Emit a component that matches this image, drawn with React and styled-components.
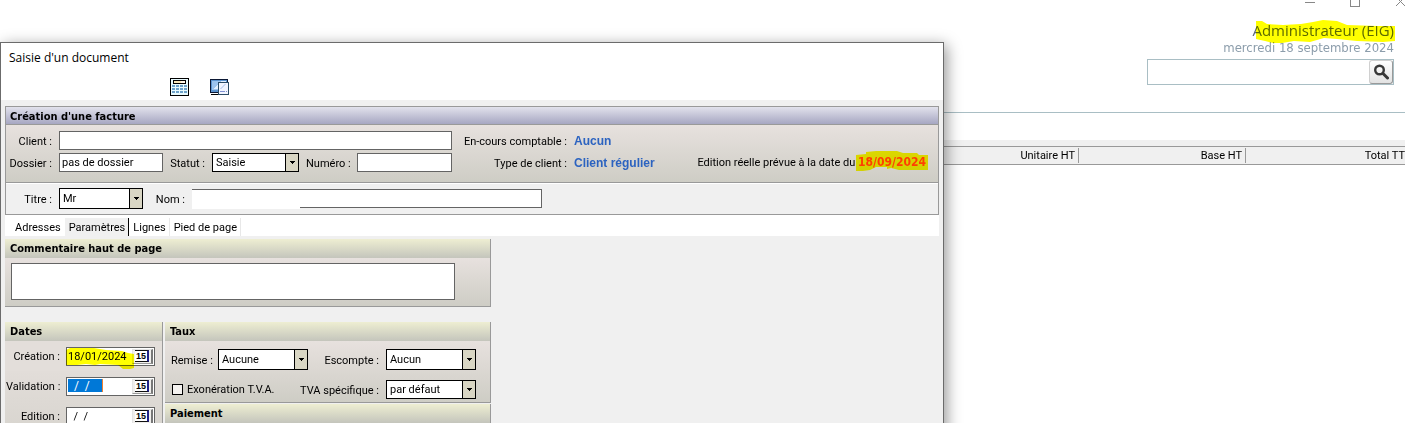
import React from "react";
import styled, { createGlobalStyle, css } from "styled-components";

const ui = 'Roboto, "Liberation Sans", Arial, sans-serif';
const heading = '"DejaVu Sans Condensed", "DejaVu Sans", sans-serif';
const modern = '"Open Sans", "Noto Sans", sans-serif';

const GlobalStyle = createGlobalStyle`
  *, *::before, *::after { box-sizing: border-box; }
  body { margin: 0; background: #fff; color: #000; font: 11px/16px ${ui}; }
  button, input, select, textarea { font: inherit; color: inherit; border-radius: 0; margin: 0; padding: 0; }
`;

const Desktop = styled.div`
  position: relative;
  height: 100vh;
  overflow: hidden;
`;

/* Main application, behind the dialog */
const AppHeader = styled.header`
  display: flex;
  flex-direction: column;
  align-items: flex-end;
  height: 113px;
  padding-right: 11px;
  border-bottom: 1px solid #a9bec4;
  font-family: ${modern};
`;
const WindowControls = styled.div`
  display: flex;
  gap: 34px;
  height: 20px;
  margin-right: -12px;
`;
const ControlButton = styled.button`
  display: flex;
  width: 11px;
  height: 10px;
  border: 0;
  background: none;
`;
const UserName = styled.div`
  font-size: 15px;
  line-height: 20px;
  color: #5d6a74;
`;
const Today = styled.div`
  font: 13px/16px ${heading};
  margin-bottom: 3px;
  color: #8c9dab;
`;
const Search = styled.form`
  display: flex;
  width: 247px;
  height: 26px;
  border: 1px solid #a9bec4;
`;
const SearchInput = styled.input`
  flex: 1;
  min-width: 0;
  border: 0;
  padding: 0 4px;
  outline: 0;
`;
const SearchButton = styled.button`
  display: grid;
  place-items: center;
  width: 24px;
  border: 1px solid #d0d0d0;
  border-right-color: #999;
  border-bottom: 1px solid #999;
  border-radius: 3px;
  background: linear-gradient(#fff, #e2e2e2);
`;
const TableArea = styled.div`
  margin-top: 27px;
  padding-top: 6px;
  background: #f0f0f0;
  overflow: hidden;
`;
const Lines = styled.table`
  width: 100%;
  table-layout: fixed;
  border-collapse: separate;
  border-spacing: 0;
  border-top: 1px solid #999;
  border-bottom: 1px solid #999;
`;
const HeadCell = styled.th`
  width: ${(p) => p.$width || "auto"};
  height: 17px;
  padding: 0;
  font-weight: 400;
  line-height: 15px;
  text-align: right;
  & > span {
    display: block;
    padding-right: 3px;
    border-right: 1px solid #999;
  }
`;

/* Highlighter strokes */
const Marked = styled.span`
  position: relative;
  white-space: nowrap;
`;
const Marker = styled.svg`
  position: absolute;
  left: ${(p) => p.$left}px;
  top: ${(p) => p.$top}px;
  mix-blend-mode: multiply;
  pointer-events: none;
`;

/* Dialog */
const Dialog = styled.section`
  position: absolute;
  top: 42px;
  left: 0;
  right: 461px;
  min-height: 100%;
  border: 1px solid #6b6b6b;
  background: #f0f0f0;
  box-shadow: 3px 3px 14px rgba(0, 0, 0, 0.4);
`;
const DialogTop = styled.header`
  height: 57px;
  background: #fff;
`;
const DialogTitle = styled.h1`
  margin: 0;
  padding: 7px 8px;
  font: 400 12px/16px ${modern};
`;
const Toolbar = styled.div`
  display: flex;
  gap: 20px;
  padding: 5px 0 0 169px;
`;
const ToolButton = styled.button`
  display: flex;
  width: 20px;
  height: 18px;
  border: 0;
  background: none;
`;
const Content = styled.div`
  padding: 6px 4px;
`;
const InvoicePanel = styled.section`
  border: 1px solid #999;
`;
const PanelTitle = styled.h2`
  margin: 0;
  height: 19px;
  padding: 0 5px;
  font: 700 11px/19px ${heading};
  background: linear-gradient(#eeeed2, #c4c5bc);
  ${(p) =>
    p.$blue &&
    css`
      height: 18px;
      padding: 0 4px;
      border-bottom: 1px solid #999;
      background: linear-gradient(#e2e2ec, #a6a6c2);
    `}
`;
const shade = "linear-gradient(#e7e1de, #cecdc5)";
const InvoiceBody = styled.div`
  display: grid;
  grid-template-columns: 46px 393px 108px auto 1fr;
  column-gap: 7px;
  row-gap: 3px;
  align-items: center;
  padding: 6px 12px 10px 0;
  background: ${shade};
`;
const Row = styled.div`
  display: flex;
  align-items: center;
  gap: 7px;
`;
const CustomerRow = styled(Row)`
  height: 32px;
  border-top: 1px solid #999;
  box-shadow: inset 0 1px #fff;
`;
const Label = styled.label`
  width: ${(p) => (p.$width ? `${p.$width}px` : "auto")};
  flex: none;
  padding-top: 2px;
  text-align: right;
  white-space: nowrap;
`;
const Value = styled.output`
  font: 700 12px/16px "Liberation Sans", Arial, sans-serif;
  color: #2c63c0;
  white-space: nowrap;
`;
const Notice = styled.div`
  justify-self: end;
  white-space: nowrap;
`;
const DueDate = styled.strong`
  font: 700 12px/16px ${heading};
  color: #ff4010;
`;
const TextInput = styled.input`
  width: ${(p) => (p.$width ? `${p.$width}px` : "100%")};
  height: 19px;
  border: 1px solid #646464;
  padding: 0 2px;
  background: #fff;
  outline: 0;
`;
const NameField = styled.div`
  position: relative;
  display: flex;
  &::after {
    content: "";
    position: absolute;
    left: 0;
    top: 1px;
    width: 108px;
    height: 19px;
    background: #fff;
    pointer-events: none;
  }
`;
const SelectBox = styled.span`
  display: grid;
  grid-template-columns: 1fr 13px;
  width: ${(p) => p.$width}px;
  height: ${(p) => (p.$tall ? 21 : 19)}px;
  border: 1px solid #000;
  background: #fff;
`;
const NativeSelect = styled.select`
  grid-area: 1 / 1 / 2 / 3;
  appearance: none;
  border: 0;
  padding: 1px 3px 0;
  background: transparent;
  outline: 0;
`;
const Arrow = styled.span`
  grid-area: 1 / 2;
  display: grid;
  place-items: center;
  border-left: 1px solid #000;
  background: #d9d6c4;
  pointer-events: none;
`;
const Tabs = styled.nav`
  display: flex;
  height: 21px;
  padding: 3px 0 0 6px;
  background: #fff;
`;
const Tab = styled.button`
  padding: 1px 3px 0 4px;
  border: 0;
  border-right: 1px solid ${(p) => (p.$active ? "#000" : p.$plain ? "#fff" : "#e8e8e8")};
  background: ${(p) => (p.$active ? "#f0f0f0" : "#fff")};
`;
const Sheet = styled.div`
  display: grid;
  grid-template-columns: 158px 1fr;
  max-width: 486px;
  column-gap: 2px;
  row-gap: 15px;
  margin-top: 3px;
`;
const Panel = styled.section`
  grid-column: ${(p) => (p.$wide ? "1 / 3" : "auto")};
  border: 1px solid #999;
  border-width: 0 1px 1px 0;
`;
const CommentBody = styled.div`
  height: 48px;
  padding: 5px 35px 6px 6px;
  background: ${shade};
`;
const CommentBox = styled.textarea`
  display: block;
  width: 100%;
  height: 37px;
  border: 1px solid #646464;
  background: #fff;
  resize: none;
  outline: 0;
`;
const DateRow = styled.div`
  display: flex;
  gap: 6px;
  height: 30px;
  padding: 6px 0 0 1px;
  background: ${(p) => (p.$flat ? "#e3deda" : "transparent")};
`;
const DatesBody = styled.div`
  height: 150px;
  background: ${shade};
`;
const DateBox = styled.span`
  position: relative;
  display: flex;
  justify-content: space-between;
  width: 89px;
  height: 19px;
  padding: 1px;
  border: 1px solid #646464;
  background: #fff;
`;
const DateInput = styled.input`
  width: ${(p) => (p.$selected ? 35 : 64)}px;
  border: 0;
  background: transparent;
  font-size: ${(p) => (p.$selected ? 12 : 11)}px;
  white-space: pre;
  outline: 0;
  ${(p) =>
    p.$selected &&
    css`
      margin-bottom: 2px;
      border-right: 1px solid #f08030;
      background: #0078d7;
      color: #fff;
    `}
`;
const CalendarButton = styled.button`
  display: flex;
  width: 21px;
  padding: 0 2px;
  border: 1px solid #e4e4e4;
  border-right: 2px solid #777;
  border-bottom-color: #999;
  background: #f0efec;
`;
const DayNumber = styled.span`
  width: 14px;
  height: 12px;
  border: solid #111;
  border-width: 1px 2px 1px 0;
  border-right-color: #20208a;
  background: #fff;
  font: 700 9px/10px "Liberation Sans", Arial, sans-serif;
  text-align: center;
`;
const Stack = styled.div`
  display: flex;
  flex-direction: column;
  gap: 1px;
`;
const RatesBody = styled.div`
  display: grid;
  row-gap: 10px;
  padding: 8px 14px 3px 6px;
  background: ${shade};
`;
const Spread = styled.div`
  display: flex;
  align-items: center;
  justify-content: space-between;
`;
const CheckLabel = styled.label`
  display: flex;
  align-items: center;
  gap: 4px;
  padding-left: 1px;
  white-space: nowrap;
`;
const Checkbox = styled.input`
  appearance: none;
  width: 11px;
  height: 11px;
  border: 1px solid #000;
  background: #f4f2ef;
`;
const PaymentBody = styled.div`
  height: 80px;
  background: ${shade};
`;

function Dropdown({ id, value, width, tall }) {
  return (
    <SelectBox $width={width} $tall={tall}>
      <NativeSelect id={id} defaultValue={value}>
        <option>{value}</option>
      </NativeSelect>
      <Arrow>
        <svg width="5" height="3" viewBox="0 0 5 3" shapeRendering="crispEdges">
          <path d="M0 0h5v1H4v1H3v1H2V2H1V1H0z" />
        </svg>
      </Arrow>
    </SelectBox>
  );
}

function DateField({ id, label, value, flat, selected, marked }) {
  return (
    <DateRow $flat={flat}>
      <Label htmlFor={id} $width={54}>{label}</Label>
      <DateBox>
        <DateInput id={id} defaultValue={value} $selected={selected} />
        <CalendarButton type="button" aria-label="Calendrier"><DayNumber>15</DayNumber></CalendarButton>
        {marked && (
          <Marker $left={-1} $top={0} width="70" height="22" viewBox="0 0 70 22">
            <path fill="#ff0" d="M0 2 4 0h24l12 2 16 1 6 2 6 1v14l-4 1h-7l-5-4-18-1-5 1-9-1-9 1H0z" />
          </Marker>
        )}
      </DateBox>
    </DateRow>
  );
}

function CalculatorIcon() {
  return (
    <svg width="20" height="18" viewBox="0 0 20 18" shapeRendering="crispEdges">
      <path fill="#000" d="M0 0h19v18H0z" />
      <path fill="#e9fbff" d="M1 1h17v16H1z" />
      <path fill="#000" d="M3 2h13v4H3z" />
      <path fill="#f8e6b8" d="M4 3h7v2H4z" />
      <path fill="#fff6e8" d="M11 3h4v2h-4z" />
      <path fill="#6da2ca" d="M2 7h3v2H2zM6 7h3v2H6zM10 7h3v2h-3zM14 7h3v2h-3zM2 10h3v2H2zM6 10h3v2H6zM10 10h3v2h-3zM14 10h3v2h-3zM2 13h3v2H2zM6 13h3v2H6zM10 13h3v2h-3zM14 13h3v2h-3z" />
    </svg>
  );
}

function ScreenIcon() {
  return (
    <svg width="20" height="18" viewBox="0 0 20 18" shapeRendering="crispEdges">
      <path fill="#0b1733" d="M0 1h18v14H0z" />
      <path fill="#5b93cf" d="M1 2h16v12H1z" />
      <path fill="#9cc3ee" d="M2 3h14v9H2z" />
      <path fill="#e2efff" d="M3 11 11 3h5l-8 8z" />
      <path fill="#fff" d="M0 15h8v3H0z" />
      <path fill="#000" d="M1 16h7v1H1z" />
      <path fill="#2b4b66" d="M8 4h11v13H8z" />
      <path fill="#f1f5ff" d="M9 5h9v11H9z" />
      <path fill="#c9d8f5" d="m10 10 5-4h2l-6 5h-1z" />
      <path fill="#7f8fd0" d="M10 13h5v1h-5zM16 13h1v1h-1z" />
    </svg>
  );
}

export default function App() {
  return (
    <Desktop>
      <GlobalStyle />
      <AppHeader>
        <WindowControls>
          <ControlButton aria-label="Réduire">
            <svg width="11" height="10" shapeRendering="crispEdges"><path stroke="#888" d="M0 2.5h10" /></svg>
          </ControlButton>
          <ControlButton aria-label="Agrandir">
            <svg width="11" height="10" fill="none" shapeRendering="crispEdges"><path stroke="#888" d="M.5-3.5h9v10h-9z" /></svg>
          </ControlButton>
          <ControlButton aria-label="Fermer">
            <svg width="11" height="10"><path stroke="#888" d="m1 6 9-9M1-3l9 9" /></svg>
          </ControlButton>
        </WindowControls>
        <UserName>
          <Marked>
            Administrateur (EIG)
            <Marker $left={4} $top={0} width="140" height="23" viewBox="0 0 140 23">
              <path fill="#ff0" d="M0 1h6l5 3 16 1 18-1 12-2 10-2 14 1 10 4 30 1h18v15l-12 1-26-1-20-2-13-1-14 4-16-1-12 2H17l-8-2-9-2z" />
            </Marker>
          </Marked>
        </UserName>
        <Today>mercredi 18 septembre 2024</Today>
        <Search role="search">
          <SearchInput aria-label="Rechercher" />
          <SearchButton type="button" aria-label="Lancer la recherche">
            <svg width="16" height="16" viewBox="0 0 16 16" fill="none" stroke="#383838">
              <circle cx="6.5" cy="6" r="4.3" strokeWidth="2.4" />
              <path d="m10 9.500 4.500 4.500" strokeWidth="3" strokeLinecap="round" />
            </svg>
          </SearchButton>
        </Search>
      </AppHeader>
      <TableArea>
        <Lines>
          <thead>
            <tr>
              <HeadCell />
              <HeadCell $width="167px"><span>Unitaire HT</span></HeadCell>
              <HeadCell $width="167px"><span>Base HT</span></HeadCell>
              <HeadCell $width="159px">Total TT</HeadCell>
            </tr>
          </thead>
        </Lines>
      </TableArea>

      <Dialog role="dialog" aria-labelledby="dialog-title">
        <DialogTop>
          <DialogTitle id="dialog-title">Saisie d'un document</DialogTitle>
          <Toolbar>
            <ToolButton aria-label="Calculatrice"><CalculatorIcon /></ToolButton>
            <ToolButton aria-label="Aperçu"><ScreenIcon /></ToolButton>
          </Toolbar>
        </DialogTop>
        <Content>
          <InvoicePanel>
            <PanelTitle $blue>Création d'une facture</PanelTitle>
            <InvoiceBody>
              <Label htmlFor="client">Client :</Label>
              <TextInput id="client" />
              <Label as="span">En-cours comptable :</Label>
              <Value>Aucun</Value>
              <span />
              <Label htmlFor="dossier">Dossier :</Label>
              <Row>
                <TextInput id="dossier" $width={104} defaultValue="pas de dossier" />
                <Label htmlFor="statut" $width={35}>Statut :</Label>
                <Dropdown id="statut" value="Saisie" width={87} />
                <Label htmlFor="numero" $width={44}>Numéro :</Label>
                <TextInput id="numero" $width={95} />
              </Row>
              <Label as="span">Type de client :</Label>
              <Value>Client régulier</Value>
              <Notice>
                Edition réelle prévue à la date du{" "}
                <Marked>
                  <DueDate>18/09/2024</DueDate>
                  <Marker $left={-2} $top={-5} width="72" height="22" viewBox="0 0 72 22">
                    <path fill="#ff0" d="M0 4 10 3V1l10-1h21l6 2h14l2 2h9v15H43l-8-2-4 1v-2H20l-6 3-7 1H0z" />
                  </Marker>
                </Marked>
              </Notice>
            </InvoiceBody>
            <CustomerRow>
              <Label htmlFor="titre" $width={46}>Titre :</Label>
              <Dropdown id="titre" value="Mr" width={84} tall />
              <Label htmlFor="nom" $width={35}>Nom :</Label>
              <NameField><TextInput id="nom" $width={350} /></NameField>
            </CustomerRow>
          </InvoicePanel>
          <Tabs>
            <Tab $plain>Adresses</Tab>
            <Tab $active>Paramètres</Tab>
            <Tab>Lignes</Tab>
            <Tab>Pied de page</Tab>
          </Tabs>
          <Sheet>
            <Panel $wide>
              <PanelTitle>Commentaire haut de page</PanelTitle>
              <CommentBody><CommentBox aria-label="Commentaire haut de page" /></CommentBody>
            </Panel>
            <Panel>
              <PanelTitle>Dates</PanelTitle>
              <DatesBody>
                <DateField id="creation" label="Création :" value="18/01/2024" flat marked />
                <DateField id="validation" label="Validation :" value="  /  /" selected />
                <DateField id="edition" label="Edition :" value="  /  /" />
              </DatesBody>
            </Panel>
            <Stack>
              <Panel>
                <PanelTitle>Taux</PanelTitle>
                <RatesBody>
                  <Spread>
                    <Row>
                      <Label htmlFor="remise" $width={40}>Remise :</Label>
                      <Dropdown id="remise" value="Aucune" width={90} tall />
                    </Row>
                    <Row>
                      <Label htmlFor="escompte">Escompte :</Label>
                      <Dropdown id="escompte" value="Aucun" width={90} tall />
                    </Row>
                  </Spread>
                  <Spread>
                    <CheckLabel><Checkbox type="checkbox" />Exonération T.V.A.</CheckLabel>
                    <Row>
                      <Label htmlFor="tva">TVA spécifique :</Label>
                      <Dropdown id="tva" value="par défaut" width={90} />
                    </Row>
                  </Spread>
                </RatesBody>
              </Panel>
              <Panel>
                <PanelTitle>Paiement</PanelTitle>
                <PaymentBody />
              </Panel>
            </Stack>
          </Sheet>
        </Content>
      </Dialog>
    </Desktop>
  );
}
